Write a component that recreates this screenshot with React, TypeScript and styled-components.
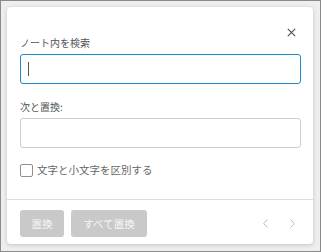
import React from "react";
import styled, { createGlobalStyle } from "styled-components";

const Global = createGlobalStyle`
  html, body { margin: 0; padding: 0; }
  body { font-family: "Noto Sans CJK JP", "Noto Sans", sans-serif; }
  * { box-sizing: border-box; }
`;

const Frame = styled.div`
  width: 321px;
  height: 252px;
  border: 1px solid #8a8a8a;
  background: #eeeeee;
  padding: 6px 7px 7px 6px;
  display: flex;
`;

const Dialog = styled.div`
  position: relative;
  flex: 1;
  background: #ffffff;
  border-radius: 4px;
  box-shadow: 0 1px 4px rgba(0, 0, 0, 0.18);
  display: flex;
  flex-direction: column;
`;

const Body = styled.div`
  padding: 28px 12px 22px 13px;
  display: flex;
  flex-direction: column;
`;

const CloseButton = styled.button`
  position: absolute;
  top: 20px;
  right: 17px;
  width: 10px;
  height: 10px;
  padding: 0;
  border: none;
  background: none;
  display: flex;
  align-items: center;
  justify-content: center;
`;

const Label = styled.div<{ $gap?: number }>`
  font-size: 10px;
  line-height: 16px;
  color: #555;
  margin-top: ${(p) => p.$gap ?? 0}px;
  margin-bottom: 3px;
`;

const Field = styled.div<{ $focused?: boolean }>`
  height: 30px;
  border-radius: 3px;
  border: 1px solid ${(p) => (p.$focused ? "#1d8ac9" : "#cdcdcd")};
  background: #fff;
  display: flex;
  align-items: center;
  padding-left: 7px;
`;

const Caret = styled.span`
  width: 1px;
  height: 14px;
  background: #555;
`;

const CheckRow = styled.label`
  margin-top: 15px;
  display: flex;
  align-items: center;
  gap: 4px;
  font-size: 10.5px;
  line-height: 14px;
  color: #666;
`;

const Box = styled.span`
  width: 13px;
  height: 13px;
  border: 1px solid #8f8f8f;
  border-radius: 2px;
  background: #fff;
`;

const Footer = styled.div`
  border-top: 1px solid #dedede;
  padding: 10px 12px 0 13px;
  display: flex;
  align-items: flex-start;
`;

const Button = styled.button<{ $w: number }>`
  width: ${(p) => p.$w}px;
  height: 27px;
  margin-right: 7px;
  border: none;
  border-radius: 3px;
  background: #c9c9c9;
  color: #f5f5f5;
  font-family: "Noto Sans CJK JP", "Noto Sans", sans-serif;
  font-size: 10.5px;
  padding: 0;
`;

const Nav = styled.div`
  margin-left: auto;
  display: flex;
  gap: 22px;
  padding-top: 9px;
  padding-right: 6px;
`;

const NavIcon = styled.span`
  width: 5px;
  height: 9px;
  display: flex;
`;

export default function App() {
  return (
    <>
      <Global />
      <Frame>
        <Dialog>
          <CloseButton aria-label="close">
            <svg width="9" height="9" viewBox="0 0 9 9">
              <path d="M0.8 0.8 L8.2 8.2 M8.2 0.8 L0.8 8.2" stroke="#555" strokeWidth="1.2" />
            </svg>
          </CloseButton>
          <Body>
            <Label>ノート内を検索</Label>
            <Field $focused>
              <Caret />
            </Field>
            <Label $gap={15}>次と置換:</Label>
            <Field />
            <CheckRow>
              <Box />
              文字と小文字を区別する
            </CheckRow>
          </Body>
          <Footer>
            <Button $w={44}>置換</Button>
            <Button $w={76}>すべて置換</Button>
            <Nav>
              <NavIcon>
                <svg width="5" height="9" viewBox="0 0 5 9">
                  <path d="M4.5 0.5 L0.7 4.5 L4.5 8.5" fill="none" stroke="#bdbdbd" strokeWidth="1" />
                </svg>
              </NavIcon>
              <NavIcon>
                <svg width="5" height="9" viewBox="0 0 5 9">
                  <path d="M0.5 0.5 L4.3 4.5 L0.5 8.5" fill="none" stroke="#bdbdbd" strokeWidth="1" />
                </svg>
              </NavIcon>
            </Nav>
          </Footer>
        </Dialog>
      </Frame>
    </>
  );
}
